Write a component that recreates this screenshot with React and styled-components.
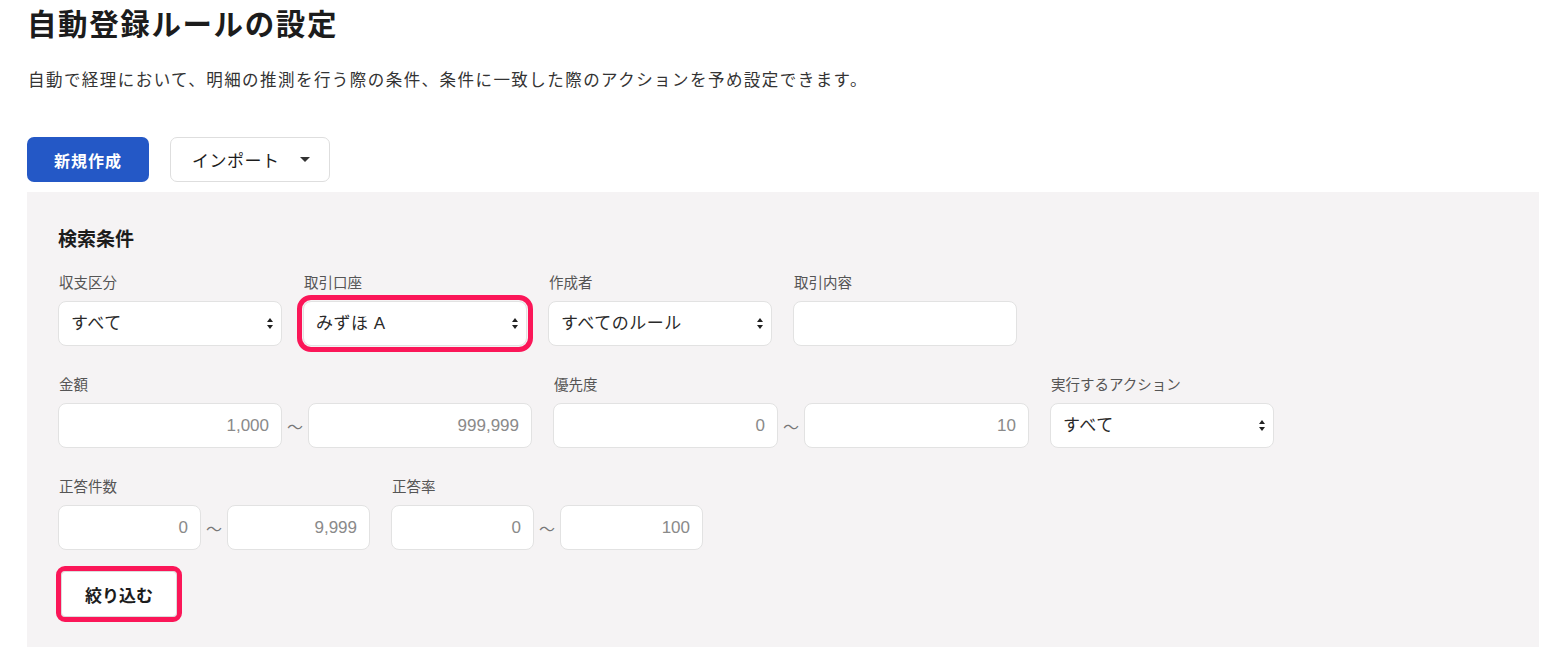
import React from "react";
import styled, { createGlobalStyle } from "styled-components";

const GlobalStyle = createGlobalStyle`
    body {
        margin: 0;
        background: #fff;
        font-family: "Liberation Sans", "Noto Sans CJK JP", sans-serif;
        color: #333;
    }
`

const Page = styled.div`
    padding: 5px 25px 0 27px;
`

const Title = styled.h1`
    margin: 0;
    font-size: 29.5px;
    line-height: 39px;
    font-weight: 700;
    letter-spacing: 1.6px;
    color: #1c1c1c;
`

const Lead = styled.p`
    margin: 24px 0 0 1px;
    font-size: 16.5px;
    line-height: 24px;
    letter-spacing: 1.45px;
    color: #333;
`

const Toolbar = styled.div`
    display: flex;
    gap: 21px;
    margin-top: 45px;
`

const PrimaryButton = styled.button`
    width: 122px;
    height: 45px;
    border: none;
    border-radius: 7px;
    background: #2458c6;
    color: #fff;
    font-family: inherit;
    font-size: 16px;
    font-weight: 700;
    letter-spacing: 1px;
`

const DropButton = styled.button`
    display: flex;
    align-items: center;
    gap: 20px;
    width: 160px;
    height: 45px;
    padding: 0 0 0 21px;
    border: 1px solid #dedede;
    border-radius: 7px;
    background: #fff;
    color: #1c1c1c;
    font-family: inherit;
    font-size: 17px;
    letter-spacing: 0.5px;
`

const Caret = styled.span`
    width: 0;
    height: 0;
    border-left: 5px solid transparent;
    border-right: 5px solid transparent;
    border-top: 5px solid #333;
`

const Panel = styled.section`
    margin-top: 10px;
    padding: 35px 32px 30px 31px;
    background: #f5f3f4;
`

const PanelTitle = styled.h2`
    margin: 0 0 20px;
    font-size: 19px;
    line-height: 26px;
    font-weight: 700;
    color: #1c1c1c;
`

const Rows = styled.div`
    display: flex;
    flex-direction: column;
    gap: 29px;
    margin-bottom: 21px;
`

const Row = styled.div`
    display: flex;
    gap: 21px;
`

const Field = styled.div`
    display: flex;
    flex-direction: column;
`

const Label = styled.label`
    font-size: 14.5px;
    line-height: 20px;
    margin: 0 0 8px 1px;
    color: #555;
`

const Range = styled.div`
    display: flex;
    align-items: center;
`

const Tilde = styled.span`
    width: 26px;
    text-align: center;
    font-size: 16px;
    color: #777;
`

const TextBox = styled.input`
    box-sizing: border-box;
    width: ${p => p.$w}px;
    height: 45px;
    padding: 0 12px;
    border: 1px solid #e2e2e2;
    border-radius: 8px;
    background: #fff;
    font-family: "Liberation Sans", "Noto Sans CJK JP", sans-serif;
    font-size: 17px;
    text-align: right;
    color: #8a8a8a;
    outline: none;
`

const SelectWrap = styled.div`
    position: relative;
    width: 224px;
    height: 45px;
    border-radius: 8px;
    ${p => p.$marked && `
        outline: 5px solid #fb1658;
        outline-offset: 1px;
    `}
`

const Select = styled.select`
    box-sizing: border-box;
    width: 100%;
    height: 100%;
    padding: 0 24px 0 12px;
    appearance: none;
    border: 1px solid #e2e2e2;
    border-radius: 8px;
    background: #fff;
    font-family: "Liberation Sans", "Noto Sans CJK JP", sans-serif;
    font-size: 17px;
    letter-spacing: 0.5px;
    color: #2a2a2a;
    outline: none;
`

const Arrows = styled.svg`
    position: absolute;
    right: 9px;
    top: 17px;
    pointer-events: none;
`

const FilterButton = styled.button`
    width: 116px;
    height: 46px;
    margin: 0 0 0 3px;
    border: 1px solid #dcdcdc;
    border-radius: 4px;
    background: #fff;
    color: #1c1c1c;
    font-family: inherit;
    font-size: 17px;
    font-weight: 700;
    outline: 5px solid #fb1658;
    outline-offset: 0px;
`

const SelectField = ({ label, value, marked }) => (
    <Field>
        <Label>{label}</Label>
        <SelectWrap $marked={marked}>
            <Select defaultValue={value}>
                <option>{value}</option>
            </Select>
            <Arrows width="6" height="11" viewBox="0 0 6 11">
                <path d="M3 0 L6 4 L0 4 Z M3 11 L6 7 L0 7 Z" fill="#222" />
            </Arrows>
        </SelectWrap>
    </Field>
)

const RangeField = ({ label, from, to, w }) => (
    <Field>
        <Label>{label}</Label>
        <Range>
            <TextBox $w={w} defaultValue={from} />
            <Tilde>〜</Tilde>
            <TextBox $w={w} defaultValue={to} />
        </Range>
    </Field>
)

const App = () => {
    return (
        <Page>
            <GlobalStyle />
            <Title>自動登録ルールの設定</Title>
            <Lead>自動で経理において、明細の推測を行う際の条件、条件に一致した際のアクションを予め設定できます。</Lead>
            <Toolbar>
                <PrimaryButton>新規作成</PrimaryButton>
                <DropButton>インポート<Caret /></DropButton>
            </Toolbar>
            <Panel>
                <PanelTitle>検索条件</PanelTitle>
                <Rows>
                    <Row>
                        <SelectField label="収支区分" value="すべて" />
                        <SelectField label="取引口座" value="みずほ A" marked />
                        <SelectField label="作成者" value="すべてのルール" />
                        <Field>
                            <Label>取引内容</Label>
                            <TextBox $w={224} />
                        </Field>
                    </Row>
                    <Row>
                        <RangeField label="金額" from="1,000" to="999,999" w={224} />
                        <RangeField label="優先度" from="0" to="10" w={225} />
                        <SelectField label="実行するアクション" value="すべて" />
                    </Row>
                    <Row>
                        <RangeField label="正答件数" from="0" to="9,999" w={143} />
                        <RangeField label="正答率" from="0" to="100" w={143} />
                    </Row>
                </Rows>
                <FilterButton>絞り込む</FilterButton>
            </Panel>
        </Page>
    )
}

export default App
